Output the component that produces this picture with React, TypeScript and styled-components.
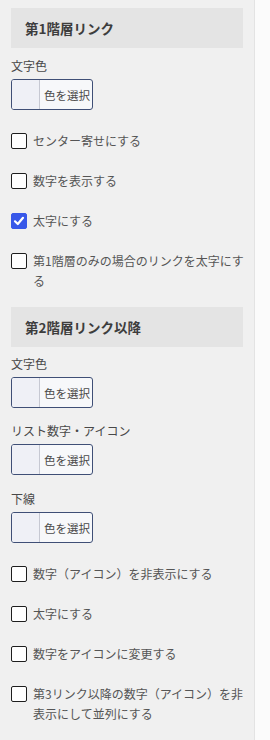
import React from "react";
import styled, { createGlobalStyle } from "styled-components";

const Global = createGlobalStyle`
  html, body { margin: 0; padding: 0; background: #fbfbfb; }
  body { font-family: "Noto Sans CJK JP", "Noto Sans", sans-serif; }
  * { box-sizing: border-box; }
`;

const Page = styled.div`
  display: flex;
  min-height: 740px;
`;

const Panel = styled.div`
  width: 255px;
  background: #f0f0f0;
  border-right: 1px solid #e3e3e3;
  padding: 8px 11px 30px;
  display: flex;
  flex-direction: column;
`;

const Heading = styled.div<{ $top?: number }>`
  height: 40px;
  margin-top: ${(p) => p.$top ?? 0}px;
  background: #e4e4e4;
  display: flex;
  align-items: center;
  padding-left: 14px;
  font-size: 13.5px;
  font-weight: 700;
  color: #3d3d3d;
`;

const Label = styled.div<{ $top: number }>`
  margin-top: ${(p) => p.$top}px;
  font-size: 12px;
  line-height: 20px;
  color: #484848;
`;

const ColorButton = styled.button`
  margin-top: 3px;
  width: 82px;
  height: 31px;
  padding: 0;
  display: flex;
  align-items: stretch;
  border: 1px solid #3f4f76;
  border-radius: 3px;
  background: #f7f8fa;
  font-family: inherit;
  cursor: pointer;
  overflow: hidden;
`;

const Swatch = styled.span`
  width: 28px;
  background: #eff0f6;
  border-right: 1px solid #c6c8d2;
`;

const ButtonText = styled.span`
  flex: 1;
  display: flex;
  align-items: center;
  justify-content: center;
  padding-left: 2px;
  font-size: 11.5px;
  color: #4a4a4a;
`;

const CheckList = styled.div`
  margin-top: 21px;
  display: flex;
  flex-direction: column;
  gap: 20px;
`;

const Row = styled.label`
  display: flex;
  align-items: flex-start;
  gap: 6px;
  font-size: 12px;
  line-height: 20px;
  color: #555555;
  cursor: pointer;
`;

const Box = styled.span<{ $checked?: boolean }>`
  flex: none;
  width: 16px;
  height: 16px;
  margin-top: 2px;
  border-radius: 2px;
  border: 1px solid ${(p) => (p.$checked ? "#3858e9" : "#1e1e1e")};
  background: ${(p) => (p.$checked ? "#3858e9" : "#ffffff")};
  display: flex;
  align-items: center;
  justify-content: center;
`;

const Text = styled.span`
  flex: 1;
  margin-right: -4px;
`;

const Check = ({ label, checked }: { label: string; checked?: boolean }) => (
  <Row>
    <Box $checked={checked}>
      {checked && (
        <svg width="12" height="12" viewBox="0 0 12 12">
          <path d="M2 6.3 L4.8 9 L10 2.8" fill="none" stroke="#fff" strokeWidth="2.2" strokeLinecap="round" strokeLinejoin="round" />
        </svg>
      )}
    </Box>
    <Text>{label}</Text>
  </Row>
);

const Picker = () => (
  <ColorButton type="button">
    <Swatch />
    <ButtonText>色を選択</ButtonText>
  </ColorButton>
);

export default function App() {
  return (
    <Page>
      <Global />
      <Panel>
        <Heading>第1階層リンク</Heading>
        <Label $top={8}>文字色</Label>
        <Picker />
        <CheckList>
          <Check label="センター寄せにする" />
          <Check label="数字を表示する" />
          <Check label="太字にする" checked />
          <Check label="第1階層のみの場合のリンクを太字にする" />
        </CheckList>
        <Heading $top={16}>第2階層リンク以降</Heading>
        <Label $top={7}>文字色</Label>
        <Picker />
        <Label $top={13}>リスト数字・アイコン</Label>
        <Picker />
        <Label $top={14}>下線</Label>
        <Picker />
        <CheckList>
          <Check label="数字（アイコン）を非表示にする" />
          <Check label="太字にする" />
          <Check label="数字をアイコンに変更する" />
          <Check label="第3リンク以降の数字（アイコン）を非表示にして並列にする" />
        </CheckList>
      </Panel>
    </Page>
  );
}
